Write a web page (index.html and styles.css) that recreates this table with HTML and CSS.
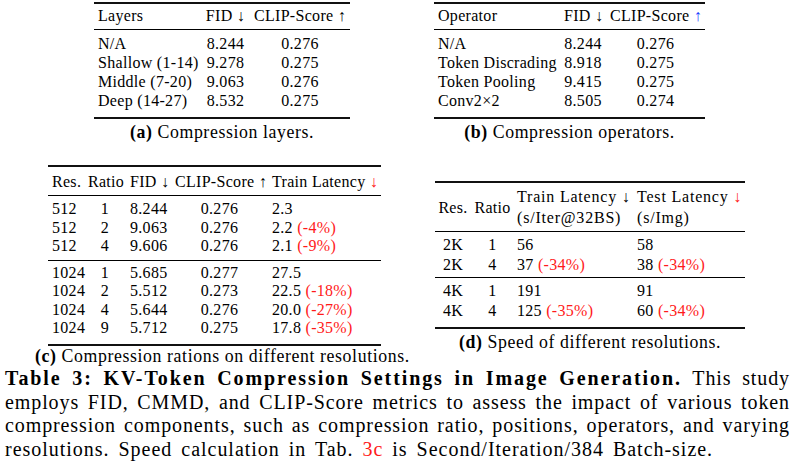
FILE: index.html
```html
<!DOCTYPE html>
<html lang="en">
<head>
<meta charset="utf-8">
<title>Table 3: KV-Token Compression Settings</title>
<link rel="stylesheet" href="styles.css">
</head>
<body>
<div class="page">
  <div class="row row-top">
    <figure class="sub sub-a">
      <table class="bt bt-a">
        <colgroup><col class="w-a1"><col class="w-a2"><col class="w-a3"></colgroup>
        <thead>
          <tr><th class="l">Layers</th><th>FID ↓</th><th>CLIP-Score ↑</th></tr>
        </thead>
        <tbody>
          <tr><td class="l">N/A</td><td>8.244</td><td>0.276</td></tr>
          <tr><td class="l">Shallow (1-14)</td><td>9.278</td><td>0.275</td></tr>
          <tr><td class="l">Middle (7-20)</td><td>9.063</td><td>0.276</td></tr>
          <tr><td class="l">Deep (14-27)</td><td>8.532</td><td>0.275</td></tr>
        </tbody>
      </table>
      <figcaption class="subcap"><b>(a)</b> Compression layers.</figcaption>
    </figure>
    <figure class="sub sub-b">
      <table class="bt bt-b">
        <colgroup><col class="w-b1"><col class="w-b2"><col class="w-b3"></colgroup>
        <thead>
          <tr><th class="l">Operator</th><th>FID ↓</th><th>CLIP-Score <span class="blue">↑</span></th></tr>
        </thead>
        <tbody>
          <tr><td class="l">N/A</td><td>8.244</td><td>0.276</td></tr>
          <tr><td class="l">Token Discrading</td><td>8.918</td><td>0.275</td></tr>
          <tr><td class="l">Token Pooling</td><td>9.415</td><td>0.275</td></tr>
          <tr><td class="l">Conv2×2</td><td>8.505</td><td>0.274</td></tr>
        </tbody>
      </table>
      <figcaption class="subcap"><b>(b)</b> Compression operators.</figcaption>
    </figure>
  </div>

  <div class="row row-bottom">
    <figure class="sub sub-c">
      <table class="bt bt-c">
        <colgroup><col class="w-c1"><col class="w-c2"><col class="w-c3"><col class="w-c4"><col class="w-c5"></colgroup>
        <thead>
          <tr><th class="l">Res.</th><th>Ratio</th><th>FID ↓</th><th>CLIP-Score ↑</th><th class="l">Train Latency <span class="red">↓</span></th></tr>
        </thead>
        <tbody>
          <tr><td class="l">512</td><td>1</td><td>8.244</td><td>0.276</td><td class="l">2.3</td></tr>
          <tr><td class="l">512</td><td>2</td><td>9.063</td><td>0.276</td><td class="l">2.2 <span class="red">(-4%)</span></td></tr>
          <tr><td class="l">512</td><td>4</td><td>9.606</td><td>0.276</td><td class="l">2.1 <span class="red">(-9%)</span></td></tr>
        </tbody>
        <tbody>
          <tr><td class="l">1024</td><td>1</td><td>5.685</td><td>0.277</td><td class="l">27.5</td></tr>
          <tr><td class="l">1024</td><td>2</td><td>5.512</td><td>0.273</td><td class="l">22.5 <span class="red">(-18%)</span></td></tr>
          <tr><td class="l">1024</td><td>4</td><td>5.644</td><td>0.276</td><td class="l">20.0 <span class="red">(-27%)</span></td></tr>
          <tr><td class="l">1024</td><td>9</td><td>5.712</td><td>0.275</td><td class="l">17.8 <span class="red">(-35%)</span></td></tr>
        </tbody>
      </table>
      <figcaption class="subcap subcap-c"><b>(c)</b> Compression rations on different resolutions.</figcaption>
    </figure>
    <figure class="sub sub-d">
      <table class="bt bt-d">
        <colgroup><col class="w-d1"><col class="w-d2"><col class="w-d3"><col class="w-d4"></colgroup>
        <thead>
          <tr>
            <th>Res.</th><th>Ratio</th>
            <th class="l two">Train Latency ↓<br>(s/Iter@32BS)</th>
            <th class="l two">Test Latency <span class="red">↓</span><br>(s/Img)</th>
          </tr>
        </thead>
        <tbody>
          <tr><td>2K</td><td>1</td><td class="l">56</td><td class="l">58</td></tr>
          <tr><td>2K</td><td>4</td><td class="l">37 <span class="red">(-34%)</span></td><td class="l">38 <span class="red">(-34%)</span></td></tr>
        </tbody>
        <tbody>
          <tr><td>4K</td><td>1</td><td class="l">191</td><td class="l">91</td></tr>
          <tr><td>4K</td><td>4</td><td class="l">125 <span class="red">(-35%)</span></td><td class="l">60 <span class="red">(-34%)</span></td></tr>
        </tbody>
      </table>
      <figcaption class="subcap"><b>(d)</b> Speed of different resolutions.</figcaption>
    </figure>
  </div>

  <p class="caption">
    <span class="line"><b class="cap-title">Table 3: KV-Token Compression Settings in Image Generation.</b> This study</span>
    <span class="line">employs FID, CMMD, and CLIP-Score metrics to assess the impact of various token</span>
    <span class="line">compression components, such as compression ratio, positions, operators, and varying</span>
    <span class="line last">resolutions. Speed calculation in Tab. <span class="red">3c</span> is Second/Iteration/384 Batch-size.</span>
  </p>
</div>
</body>
</html>
```

FILE: styles.css
```css
html, body {
  margin: 0;
  padding: 0;
  background: #ffffff;
}

body {
  width: 796px;
  height: 466px;
  overflow: hidden;
  font-family: "Liberation Serif", "Times New Roman", serif;
  color: #000;
}

.page {
  padding-top: 2px;
}

.row {
  display: flex;
}

.row-top {
  padding-left: 94px;
  gap: 84px;
  align-items: flex-start;
}

.row-bottom {
  margin-top: 22px;
  padding-left: 48px;
  gap: 54px;
  align-items: flex-start;
}

.sub {
  margin: 0;
  display: flex;
  flex-direction: column;
  align-items: center;
}

.sub-a { width: 256px; }
.sub-b { width: 271px; }
.sub-c { width: 333px; }
.sub-d { width: 310px; margin-top: 16px; }

/* booktabs-like tables */
.bt {
  border-collapse: collapse;
  table-layout: fixed;
  font-size: 16px;
  letter-spacing: 0.3px;
  line-height: 19px;
  border-top: 2px solid #111;
  border-bottom: 2px solid #111;
  width: 100%;
}

.bt th,
.bt td {
  font-weight: normal;
  white-space: nowrap;
  text-align: center;
  padding: 0 4px;
  vertical-align: baseline;
}

.bt .l { text-align: left; }

.bt thead th {
  padding-top: 2px;
  padding-bottom: 4px;
  border-bottom: 1px solid #000;
}

.bt tbody + tbody tr:first-child td {
  border-top: 1px solid #000;
}

.bt tbody tr:first-child td { padding-top: 4px; }
.bt tbody tr:last-child td { padding-bottom: 5px; }
.bt tbody:last-child tr:last-child td { padding-bottom: 7px; }

.w-a1 { width: 107px; }
.w-a2 { width: 49px; }
.w-a3 { width: 100px; }

.w-b1 { width: 126px; }
.w-b2 { width: 46px; }
.w-b3 { width: 99px; }

.w-c1 { width: 36px; }
.w-c2 { width: 42px; }
.w-c3 { width: 45px; }
.w-c4 { width: 97px; }
.w-c5 { width: 113px; }

.w-d1 { width: 36px; }
.w-d2 { width: 43px; }
.w-d3 { width: 120px; }
.w-d4 { width: 111px; }

.bt-c { line-height: 18.3px; }
.bt-c thead th { padding-top: 6px; }
.bt-c tbody + tbody tr:first-child td { padding-top: 3px; }

.bt-d th,
.bt-d td { padding-left: 3px; padding-right: 3px; }
.bt-d thead th { vertical-align: middle; padding-top: 3px; padding-bottom: 3px; }
.bt-d thead th.two { line-height: 21px; letter-spacing: 0.8px; }
.bt-d tbody tr:first-child td { padding-top: 3px; }
.bt-d tbody tr:last-child td { padding-bottom: 3px; }
.bt-d tbody tr + tr td { padding-top: 1px; }

.subcap {
  font-size: 17.8px;
  letter-spacing: 0.6px;
  line-height: 21px;
  margin-top: 3px;
  white-space: nowrap;
  text-align: center;
}

.subcap b { font-weight: bold; }

.subcap-c {
  align-self: flex-start;
  margin-left: -13px;
  margin-top: 1px;
  line-height: 19px;
}

.caption {
  margin: 1px 0 0 0;
  padding-left: 5px;
  width: 785px;
  font-size: 20px;
  line-height: 23.5px;
  letter-spacing: 0.9px;
  word-spacing: 2px;
}

.caption .line {
  display: block;
  text-align: justify;
  text-align-last: justify;
  white-space: nowrap;
}

.caption .line.last {
  text-align-last: left;
  word-spacing: 3px;
  letter-spacing: 0.98px;
}

.cap-title {
  font-weight: bold;
  letter-spacing: 1.9px;
  word-spacing: 1px;
}

.red { color: #ff1a1a; }
.blue { color: #1a3cff; }
```
